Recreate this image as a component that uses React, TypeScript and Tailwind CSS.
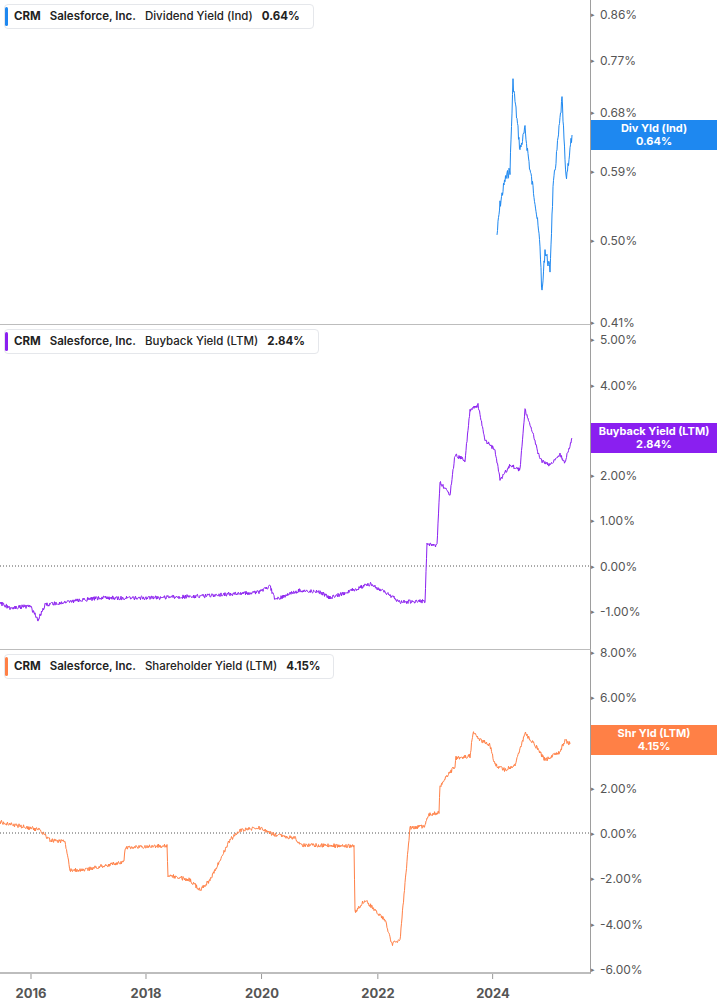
const W = 591;

type Pt = [number, number];

function jitter(pts: Pt[], top: number, seed: number, amp: number): string {
  let s = seed;
  const rnd = () => {
    s = (s * 9301 + 49297) % 233280;
    return s / 233280 - 0.5;
  };
  const out: string[] = [];
  for (let i = 0; i < pts.length - 1; i++) {
    const [x1, y1] = pts[i];
    const [x2, y2] = pts[i + 1];
    const steps = Math.max(1, Math.round(Math.abs(x2 - x1) * 2));
    for (let k = 0; k < steps; k++) {
      const t = k / steps;
      out.push(`${(x1 + (x2 - x1) * t).toFixed(1)},${(y1 + (y2 - y1) * t - top + rnd() * amp).toFixed(1)}`);
    }
  }
  const last = pts[pts.length - 1];
  out.push(`${last[0]},${last[1] - top}`);
  return out.join(" ");
}

const blue: Pt[] = [[497,235],[500,205],[505,180],[510,170],[513,82],[517,120],[520,150],[525,130],[530,170],[535,200],[540,245],[542,295],[545,250],[550,270],[553,190],[557,150],[562,100],[566,180],[570,150],[572,135]];
const purple: Pt[] = [[0,603],[10,608],[30,606],[38,620],[45,605],[80,600],[100,598],[150,598],[200,596],[260,592],[270,586],[275,600],[300,590],[320,592],[330,598],[370,584],[390,595],[400,602],[425,601],[427,545],[437,545],[440,482],[450,495],[455,455],[465,460],[470,410],[478,405],[485,440],[495,450],[500,480],[510,465],[520,470],[525,410],[532,430],[540,460],[550,465],[560,455],[565,462],[572,438]];
const orange: Pt[] = [[0,822],[20,826],[40,830],[50,840],[65,842],[70,870],[85,870],[100,866],[124,862],[125,848],[150,846],[167,846],[168,875],[190,880],[200,890],[210,880],[230,840],[240,830],[260,828],[275,835],[295,838],[300,845],[354,846],[355,912],[365,900],[375,910],[385,920],[392,944],[400,940],[410,828],[425,826],[428,815],[439,812],[440,786],[455,766],[456,758],[470,756],[473,733],[480,740],[490,745],[495,765],[505,770],[515,765],[525,733],[535,745],[545,760],[560,752],[565,740],[570,744]];

type Panel = {
  top: number;
  height: number;
  color: string;
  metric: string;
  value: string;
  badge: string;
  badgeY: number;
  ticks: [string, number][];
  zero?: number;
  pts: Pt[];
  amp: number;
};

const panels: Panel[] = [
  { top: 0, height: 325, color: "#1e88f0", metric: "Dividend Yield (Ind)", value: "0.64%", badge: "Div Yld (Ind)", badgeY: 120,
    ticks: [["0.86%",14],["0.77%",60],["0.68%",112],["0.59%",171],["0.50%",240],["0.41%",322]], pts: blue, amp: 10 },
  { top: 325, height: 325, color: "#8a1ff0", metric: "Buyback Yield (LTM)", value: "2.84%", badge: "Buyback Yield (LTM)", badgeY: 423,
    ticks: [["5.00%",339],["4.00%",385],["2.00%",475],["1.00%",520],["0.00%",566],["-1.00%",611]], zero: 566, pts: purple, amp: 4 },
  { top: 650, height: 324, color: "#ff8046", metric: "Shareholder Yield (LTM)", value: "4.15%", badge: "Shr Yld (LTM)", badgeY: 725,
    ticks: [["8.00%",652],["6.00%",697],["2.00%",788],["0.00%",833],["-2.00%",878],["-4.00%",924],["-6.00%",969]], zero: 833, pts: orange, amp: 4 },
];

function ChartPanel({ p, last }: { p: Panel; last: boolean }) {
  return (
    <div className="flex" style={{ height: p.height }}>
      <div className={`relative w-[591px] border-r border-[#9e9e9e] ${last ? "border-b-2 border-b-[#bdbdbd]" : "border-b border-b-[#bdbdbd]"}`}>
        <svg className="absolute inset-0" width={W} height={p.height}>
          {p.zero !== undefined && (
            <line x1={0} x2={W} y1={p.zero - p.top} y2={p.zero - p.top} stroke="#555" strokeWidth={1} strokeDasharray="1 2" />
          )}
          <polyline points={jitter(p.pts, p.top, p.top + 7, p.amp)} fill="none" stroke={p.color} strokeWidth={1} strokeLinejoin="round" />
        </svg>
        <div className="absolute left-[4px] top-[4px] flex h-[25px] items-center gap-[9px] rounded border border-[#e5e7eb] bg-white pl-[9px] pr-[13px] text-[11.5px] text-[#222]">
          <span className="absolute left-0 top-[2px] bottom-[2px] w-[3px] rounded" style={{ background: p.color }} />
          <span className="font-bold">CRM</span>
          <span className="font-semibold">Salesforce, Inc.</span>
          <span className="font-medium">{p.metric}</span>
          <span className="font-bold">{p.value}</span>
        </div>
      </div>
      <div className="relative flex-1 text-[12px] text-[#555]">
        {p.ticks.map(([t, y]) => (
          <div key={t} className="absolute left-0 flex items-center" style={{ top: y - p.top - 8 }}>
            <span className="mr-[5px] text-[7px] text-[#777]">▸</span>
            <span>{t}</span>
          </div>
        ))}
        <div
          className="absolute left-0 right-0 flex h-[30px] flex-col items-center justify-center text-[11px] font-bold leading-[13px] text-white"
          style={{ top: p.badgeY - p.top, background: p.color }}
        >
          <span>{p.badge}</span>
          <span>{p.value}</span>
        </div>
      </div>
    </div>
  );
}

export default function App() {
  const years = [["2016", 31], ["2018", 146], ["2020", 262], ["2022", 378], ["2024", 493]] as const;
  return (
    <div className="h-[1005px] w-[717px] overflow-hidden bg-white" style={{ fontFamily: "Inter, 'Liberation Sans', sans-serif" }}>
      {panels.map((p, i) => (
        <ChartPanel key={p.metric} p={p} last={i === 2} />
      ))}
      <div className="relative h-[30px] w-[591px] text-[13px] font-bold text-[#555]">
        {years.map(([y, x]) => (
          <div key={y} className="absolute top-0 flex -translate-x-1/2 flex-col items-center" style={{ left: x }}>
            <div className="h-[5px] w-px bg-[#999]" />
            <span className="mt-[5px]">{y}</span>
          </div>
        ))}
      </div>
    </div>
  );
}
